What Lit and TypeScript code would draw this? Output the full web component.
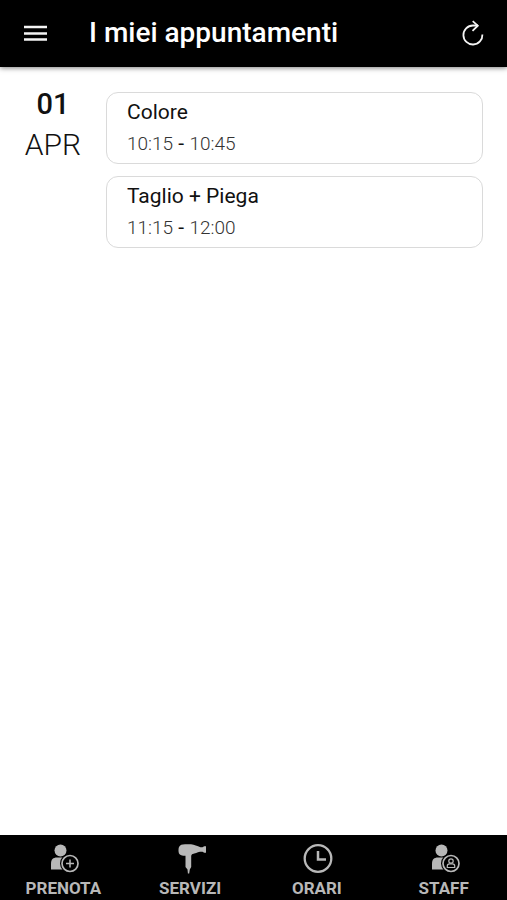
import { LitElement, html, css, svg } from "lit";
import { customElement, state } from "lit/decorators.js";

interface Appointment {
  service: string;
  from: string;
  to: string;
}

const person = svg`
  <circle cx="13.500" cy="7.500" r="6" />
  <path d="M4 26.500v-6c0-4 2-6 6-6h8l3 2v10z" />
`;

const badge = svg`
  <circle cx="23" cy="20.500" r="10" fill="#000" />
  <circle cx="23" cy="20.500" r="8" fill="none" stroke="currentColor" stroke-width="1.700" />
`;

const icons = {
  book: svg`${person}${badge}
    <path d="M23 16.500v8M19 20.500h8" fill="none" stroke="currentColor" stroke-width="1.500" />`,
  dryer: svg`
    <path d="M5 4C6 2 8 1.300 11 1.300h6c3.500.2 6 2 9.500 2.900h2l1.700-1h2v6.600h-2l-1.700-1H26c-3 .6-4.500 1.700-8 2.500l-.8 1.500V24l-1.400 2.500-.6 4h-1.300l-.4-4L11.500 24V12.800C8 12.800 5.800 12 5 10.500 4.300 8.500 4.300 6 5 4z" />`,
  clock: svg`
    <circle cx="17" cy="15.500" r="13.300" fill="none" stroke="currentColor" stroke-width="2.300" />
    <path d="M17 8V16.500h8" fill="none" stroke="currentColor" stroke-width="2.500" />`,
  staff: svg`${person}${badge}
    <circle cx="23" cy="18" r="2.200" fill="none" stroke="currentColor" stroke-width="1.200" />
    <path d="M19.300 24.500V23c0-1.500 1-2.200 2.200-2.200h3c1.200 0 2.200.7 2.200 2.200v1.500z" fill="none" stroke="currentColor" stroke-width="1.200" />`,
};

@customElement("app-root")
export class AppRoot extends LitElement {
  @state() private appointments: Appointment[] = [
    { service: "Colore", from: "10:15", to: "10:45" },
    { service: "Taglio + Piega", from: "11:15", to: "12:00" },
  ];

  private tabs = [
    { label: "PRENOTA", icon: icons.book },
    { label: "SERVIZI", icon: icons.dryer },
    { label: "ORARI", icon: icons.clock },
    { label: "STAFF", icon: icons.staff },
  ];

  static styles = css`
    :host {
      display: flex;
      flex-direction: column;
      min-height: 100vh;
      background: #fff;
      color: #111;
      font-family: Roboto, "Liberation Sans", sans-serif;
    }
    * {
      box-sizing: border-box;
    }
    header {
      display: flex;
      align-items: center;
      height: 67px;
      padding: 0 20px;
      background: #000;
      color: #fff;
      box-shadow: 0 1px 5px rgba(0, 0, 0, 0.5);
    }
    h1 {
      flex: 1;
      margin: 0 0 0 37px;
      padding-bottom: 2px;
      font-size: 28px;
      line-height: 32px;
      font-weight: 500;
    }
    .icon-button {
      display: flex;
      padding: 0;
      border: 0;
      background: none;
      color: #f4f4f4;
      cursor: pointer;
    }
    .icon-button svg {
      width: 32px;
      height: 32px;
    }
    .icon-button svg.reload {
      width: 28px;
      height: 28px;
    }
    main {
      flex: 1;
    }
    .day {
      display: flex;
      padding: 25px 24px 0 0;
    }
    .date {
      display: flex;
      flex-direction: column;
      flex: 0 0 106px;
      align-items: center;
    }
    .number {
      font-size: 29px;
      line-height: 24px;
      font-weight: 500;
    }
    .month {
      margin-top: 11px;
      font-size: 30px;
      line-height: 36px;
      font-weight: 300;
    }
    .list {
      display: flex;
      flex: 1;
      flex-direction: column;
      gap: 12px;
      margin: 0;
      padding: 0;
      list-style: none;
    }
    .card {
      padding: 6px 20px;
      border: 1px solid #dadada;
      border-radius: 12px;
      line-height: 26px;
    }
    h2 {
      margin: 0;
      font-size: 21px;
      font-weight: 400;
      line-height: 26px;
    }
    .time {
      margin: 6px 0 0;
      font-size: 19px;
      font-weight: 300;
      color: #333;
    }
    .dash {
      font-size: 21px;
      font-weight: 400;
      line-height: 20px;
      color: #111;
    }
    nav {
      display: grid;
      grid-template-columns: repeat(4, 1fr);
      height: 65px;
      padding-top: 8px;
      background: #000;
    }
    .tab {
      display: flex;
      flex-direction: column;
      align-items: center;
      gap: 3px;
      color: #b8b8b8;
      font-size: 17px;
      line-height: 20px;
      font-weight: 700;
      text-decoration: none;
    }
    .tab svg {
      width: 32px;
      height: 32px;
      fill: currentColor;
    }
  `;

  render() {
    return html`
      <header>
        <button class="icon-button" aria-label="Menu">
          <svg viewBox="0 0 32 32" fill="none" stroke="currentColor" stroke-width="2.500">
            <path d="M4 9h23M4 15.500h23M4 21.500h23" />
          </svg>
        </button>
        <h1>I miei appuntamenti</h1>
        <button class="icon-button" aria-label="Aggiorna">
          <svg class="reload" viewBox="0 0 28 28" fill="none" stroke="currentColor" stroke-width="1.800">
            <path d="M23.400 14.500A9.500 9.500 0 1 1 13.900 5.500h5" />
            <path d="M13.700 1.200 18.800 5.700l-5.300 5.200" />
          </svg>
        </button>
      </header>
      <main>
        <section class="day">
          <div class="date">
            <span class="number">01</span>
            <span class="month">APR</span>
          </div>
          <ul class="list">
            ${this.appointments.map(
              (a) => html`<li class="card">
                <h2>${a.service}</h2>
                <p class="time">${a.from}<span class="dash"> - </span>${a.to}</p>
              </li>`
            )}
          </ul>
        </section>
      </main>
      <nav>
        ${this.tabs.map(
          (t) => html`<a class="tab" href="#">
            <svg viewBox="0 0 32 32" aria-hidden="true">${t.icon}</svg>
            <span>${t.label}</span>
          </a>`
        )}
      </nav>
    `;
  }
}
